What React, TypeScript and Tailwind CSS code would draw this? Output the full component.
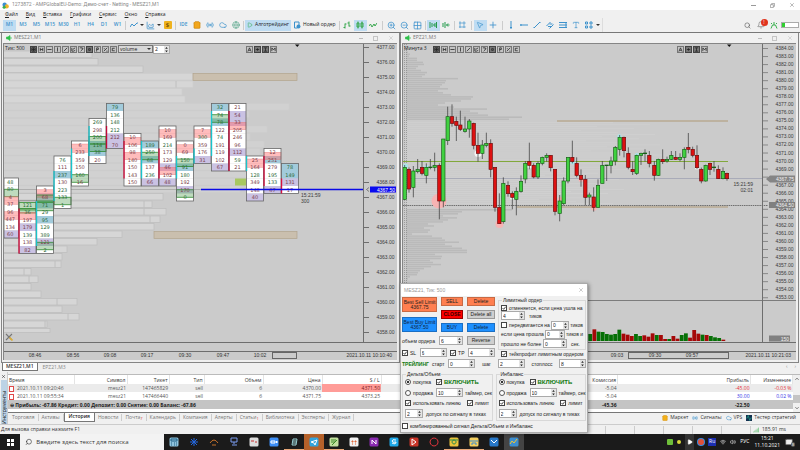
import type { ReactNode } from "react";
import {
  Activity,
  AreaChart,
  Bell,
  Cloud,
  Frame,
  Globe,
  Grid2x2,
  Mail,
  MousePointer2,
  Play,
  Plus,
  Radio,
  Search,
  ShoppingBag,
  Signal,
  Type,
  Volume2,
  Wifi,
  X,
  ZoomIn,
  ZoomOut,
} from "lucide-react";

type Column = {
  top: number;
  values: string[];
  // one letter per cell: w white, b blue, p purple
  fill: string;
  // imbalance boxes: kind, first row, row count
  boxes: [string, number, number][];
  stripe?: [string, number, number];
};

// A leading "+" marks a positive delta, drawn in green
const COLUMNS: Column[] = [
  { top: 178, values: ["+48", "+80", "4", "37", "96", "447", "134", "60"], fill: "wwwwwwwp", boxes: [["g", 1.5, 1], ["r", 2.5, 1], ["r", 4.5, 1]] },
  { top: 201, values: ["+121", "+36", "197", "179", "+139", "138", "82"], fill: "wwwpwwp", boxes: [["g", 0.2, 1], ["g", 1, 0.6], ["r", 1.5, 1]], stripe: ["#d81040", 1, 6] },
  { top: 186, values: ["3", "68", "+71", "+29", "+95", "+129", "+389", "121", "+2"], fill: "wpbwbwwpw", boxes: [["r", 0.5, 1], ["g", 1.2, 1], ["g", 2, 1.3], ["g", 7.5, 1]], stripe: ["#18c4cc", 2, 6] },
  { top: 156, values: ["+76", "111", "+237", "130", "+223", "+133", "+1"], fill: "wwbwwww", boxes: [["g", 5.5, 1]], stripe: ["#18c4cc", 2, 4] },
  { top: 141, values: ["6", "233", "359", "150", "+160", "16"], fill: "wwwwww", boxes: [["r", 0.4, 1.1], ["g", 4.5, 1]], stripe: ["#18c4cc", 1, 4] },
  { top: 118.5, values: ["+269", "298", "+200", "+114", "+38", "20"], fill: "wwwbbw", boxes: [["g", 2.4, 1], ["g", 3.4, 1]], stripe: ["#18c4cc", 1, 4] },
  { top: 103.5, values: ["+79", "+136", "+148", "+212", "212", "70"], fill: "bwwwpp", boxes: [], stripe: ["#c00838", 3, 3] },
  { top: 133.5, values: ["10", "106", "98", "140", "150", "143", "150"], fill: "wwwwwww", boxes: [["r", 0.5, 1], ["r", 2.5, 1]], stripe: ["#d81040", 1, 5] },
  { top: 141, values: ["+189", "+250", "+68", "137", "+236", "66"], fill: "bwbwwp", boxes: [["g", 1.5, 1]], stripe: ["#18c4cc", 0, 5] },
  { top: 126, values: ["10", "169", "+214", "173", "129", "46", "102", "48"], fill: "wwwwwpwp", boxes: [["r", 0.5, 1], ["r", 5.5, 1]], stripe: ["#d81040", 3, 4] },
  { top: 141, values: ["0", "69", "+150", "+91", "+180", "192", "170", "+0"], fill: "wwwbwwpw", boxes: [["r", 0.5, 1], ["g", 2.4, 1], ["g", 6.5, 1]], stripe: ["#18c4cc", 2, 3] },
  { top: 126, values: ["7", "+300", "359", "176", "31"], fill: "wwwwp", boxes: [["r", 0.5, 1]], stripe: ["#18c4cc", 3, 2] },
  { top: 103.5, values: ["+32", "+74", "+78", "122", "+74", "191", "119", "102", "67"], fill: "bwbwwwwwp", boxes: [["g", 1.5, 1]], stripe: ["#18c4cc", 1, 6] },
  { top: 103.5, values: ["21", "54", "33", "205", "246", "96", "112", "+59", "21"], fill: "wppwwwpww", boxes: [["r", 2.5, 1]], stripe: ["#c00838", 1, 8] },
  { top: 156, values: ["25", "164", "+128", "349", "148", "40"], fill: "wwwwwp", boxes: [["r", 0.4, 1.1]], stripe: ["#18c4cc", 0, 2] },
  { top: 148.5, values: ["12", "251", "279", "+195", "+133", "67"], fill: "wbwwwp", boxes: [["r", 0.5, 1]], stripe: ["#d81040", 1, 4] },
  { top: 163.5, values: ["+78", "+149", "131", "17"], fill: "bbpw", boxes: [], stripe: ["#d81040", 2, 2] },
];

const CELL_FILL: Record<string, string> = { w: "#ffffff", b: "#a2cbdb", p: "#cac2e3" };

// Right edges of the market profile rows, top to bottom
const PROFILE = [
  92, 98, 143, 193, 193, 182, 185, 289, 249, 246, 267, 250, 264, 260, 255, 250, 250, 246, 240,
  163, 152, 166, 160, 154, 122, 97, 67, 62, 61, 31, 38, 31, 41, 77, 62, 79, 47, 50,
];
const PROFILE_SPLITS: [number, number][] = [
  [176, 81], [144, 201], [144, 208.5], [150, 216], [55, 261], [24, 268.5], [29, 276], [57, 298.5], [68, 313.5], [45, 321],
];

// centre, high, low, body top, body bottom, rising
type Candle = [number, number, number, number, number, number];

const EARLY: Candle[] = [
  [14, 225, 330, 232, 328, 1], [27, 232, 308, 238, 297, 0], [40, 228, 322, 243, 292, 1], [53, 207, 250, 238, 245, 1],
  [66, 213, 256, 232, 250, 0], [79, 220, 280, 232, 256, 1], [91, 207, 238, 231, 233, 1], [104, 188, 244, 226, 232, 1],
  [118, 220, 388, 226, 333, 0], [130, 147, 352, 147, 333, 1], [143, 50, 165, 80, 152, 1], [156, 43, 110, 80, 100, 0],
  [169, 80, 153, 94, 106, 0], [181, 62, 123, 105, 118, 0], [195, 80, 128, 117, 124, 1], [208, 87, 143, 93, 117, 1],
  [221, 98, 178, 100, 166, 0], [234, 128, 215, 166, 190, 0], [247, 150, 207, 165, 190, 1], [259, 128, 172, 160, 166, 1],
  [272, 148, 262, 160, 238, 0], [285, 232, 365, 232, 352, 0], [298, 310, 401, 352, 401, 0], [310, 262, 401, 280, 395, 1],
  [324, 274, 320, 286, 311, 0], [337, 304, 358, 310, 322, 0], [349, 292, 376, 304, 328, 1], [363, 256, 308, 274, 304, 1],
  [376, 213, 280, 220, 267, 1], [388, 158, 238, 214, 226, 0], [401, 220, 265, 226, 261, 0], [414, 214, 267, 220, 261, 1],
  [427, 200, 226, 202, 220, 1], [440, 190, 215, 196, 202, 1], [452, 196, 244, 196, 233, 0], [465, 238, 376, 238, 364, 0],
  [479, 315, 394, 333, 370, 1], [491, 262, 346, 273, 341, 1], [504, 202, 280, 202, 273, 1], [517, 152, 220, 202, 215, 0],
  [530, 202, 262, 220, 256, 0], [543, 238, 290, 256, 268, 0], [556, 255, 346, 268, 322, 0], [568, 308, 346, 315, 321, 1],
  [581, 292, 365, 321, 352, 0], [594, 268, 352, 286, 352, 1],
];

const LATE: Candle[] = [
  [37, 363, 430, 376, 430, 1], [50, 376, 423, 375, 377, 1], [63, 350, 400, 363, 376, 1], [76, 318, 376, 322, 363, 1],
  [89, 285, 347, 292, 328, 1], [102, 290, 352, 292, 332, 0], [115, 322, 388, 340, 382, 0], [128, 363, 405, 388, 395, 0],
  [140, 344, 405, 346, 400, 1], [153, 338, 375, 340, 346, 1], [165, 328, 365, 339, 341, 1], [178, 333, 382, 346, 370, 0],
  [193, 363, 422, 376, 406, 0], [205, 356, 408, 358, 406, 1], [218, 328, 372, 358, 365, 0], [231, 350, 368, 358, 363, 1],
  [244, 333, 360, 346, 358, 1], [257, 333, 360, 352, 358, 0], [270, 340, 364, 352, 358, 1], [283, 322, 388, 328, 352, 1],
  [295, 279, 340, 322, 328, 0], [308, 320, 352, 328, 346, 0], [321, 316, 388, 346, 383, 0], [334, 383, 430, 388, 423, 0],
  [347, 374, 425, 376, 423, 1], [360, 368, 405, 370, 388, 0], [372, 363, 395, 381, 383, 1], [385, 376, 417, 388, 416, 0],
  [399, 382, 418, 394, 416, 1], [411, 398, 422, 400, 416, 0],
];

const VOLUMES: [number, number][] = [
  [21, 1], [35, 0], [28, 1], [27, 1], [21, 1], [19, 1], [21, 1], [34, 1], [22, 0], [19, 0], [15, 0], [21, 1], [15, 1],
  [17, 0], [13, 0], [23, 0], [18, 1], [18, 0], [6, 0], [6, 1], [15, 0], [7, 0], [18, 1], [23, 1], [10, 0], [33, 0],
  [22, 0], [19, 1], [18, 0], [15, 1], [11, 1], [9, 1], [4, 0],
];

// Profile of the second chart above and below the value area
const UPPER = [8, 10, 9, 17, 17, 23, 24, 18, 16, 21, 27, 25, 22, 58, 46, 45, 42, 40, 48, 38, 43, 51, 73, 71, 61, 45, 38, 54, 87, 70, 78, 88, 122, 109];
const LOWER = [112, 62, 58, 43, 57, 48, 43, 28, 34, 24, 30, 28, 12, 32, 42, 45, 59, 45, 52, 62, 67, 67, 35, 42, 41, 30, 33, 41, 31, 24, 20, 18, 17, 10, 8];

function range(from: number, to: number) {
  return Array.from({ length: from - to + 1 }, (_, i) => from - i);
}

function Footprint() {
  return (
    <g className="text-[5px]" textAnchor="middle" fontFamily="DejaVu Sans">
      {COLUMNS.map((col, i) => {
        const x = i === 0 ? 4 : 19 + 17.5 * (i - 1);
        const w = i === 0 ? 14.5 : 17;
        return (
          <g key={i}>
            {col.values.map((_, r) => (
              <rect key={r} x={x} y={col.top + r * 7.5} width={w} height={7.5} fill={CELL_FILL[col.fill[r]]} />
            ))}
            {col.boxes.map(([kind, row, rows], b) => (
              <rect
                key={b}
                x={x}
                y={col.top + row * 7.5}
                width={w}
                height={rows * 7.5}
                fill={kind === "g" ? "#4a9a4a" : "#ff6a6a"}
                fillOpacity={kind === "g" ? 0.36 : 0.45}
                stroke={kind === "g" ? "#2f8a2f" : "#e07a7a"}
                strokeWidth={kind === "g" ? 0.8 : 0.4}
              />
            ))}
            <rect x={x} y={col.top} width={w} height={col.values.length * 7.5} fill="none" stroke="#666" strokeWidth={0.8} />
            {col.stripe && (
              <rect x={x - 0.6} y={col.top + col.stripe[1] * 7.5} width={1.3} height={col.stripe[2] * 7.5} fill={col.stripe[0]} />
            )}
            {col.values.map((v, r) => (
              <text key={r} x={x + w / 2 - (i === 0 ? 1 : 0)} y={col.top + r * 7.5 + 5.6} fill={v[0] === "+" ? "#2f6b3c" : "#7d3f4c"}>
                {v.replace("+", "")}
              </text>
            ))}
          </g>
        );
      })}
    </g>
  );
}

function TimeAxis({ x, labels, date, box }: { x: number; labels: [number, string][]; date: string; box: [number, number] }) {
  return (
    <g fontFamily="Liberation Sans" className="text-[5px]" fill="#333">
      <path d={`M${x} 342.5h393M${x} 351.5h393`} stroke="#6e6e6e" />
      <rect x={box[0]} y={352.5} width={box[1]} height={6} fill="none" stroke="#666" />
      {labels.map(([lx, t]) => (
        <text key={t} x={lx} y={357} textAnchor="middle">
          {t}
        </text>
      ))}
      <text x={x + 388} y={357} textAnchor="end">
        {date}
      </text>
    </g>
  );
}

function ClusterChart() {
  return (
    <svg viewBox="4 44 393 316" className="block size-full" preserveAspectRatio="xMinYMin meet">
      <rect x={4} y={44} width={393} height={316} fill="#cbcbcb" />
      {PROFILE.map((edge, i) => (
        <rect
          key={i}
          x={3}
          y={51 + i * 7.5}
          width={edge - 3}
          height={i === PROFILE.length - 1 ? 4 : 6.5}
          fill={i > 6 && i < 19 ? "#d1d1d1" : "#d6d6d6"}
          stroke={i > 2 && i < 19 ? "#cdcdcd" : "#bdbdbd"}
          strokeWidth={0.7}
        />
      ))}
      {PROFILE_SPLITS.map(([x, y]) => (
        <path key={y} d={`M${x} ${y}v6.5`} stroke="#bababa" strokeWidth={0.8} />
      ))}
      <rect x={193} y={73.5} width={104} height={7} fill="#cabfae" stroke="#b3a48e" strokeWidth={0.7} />
      <rect x={154} y={231.5} width={143} height={7} fill="#cabfae" stroke="#b3a48e" strokeWidth={0.7} />
      <path d="M4 189.5h359" stroke="#a6a6a6" strokeWidth={0.8} />
      <Footprint />
      <rect x={235} y={178.5} width={11} height={7} fill="#a8c860" />
      <path d="M201 189.5h162" stroke="#0a0ae6" strokeWidth={1.4} />
      <path d="M363.5 44v298" stroke="#6e6e6e" />
      <path d="M295 44.5h4.500l-2.250 2.500z" fill="#111" />
      <g fontFamily="Liberation Sans" className="text-[5px]" fill="#3a3a3a">
        {range(4377, 4358).map((p) => {
          const y = 332 - (p - 4358) * 15;
          return (
            <g key={p}>
              <path d={`M364 ${y + 0.5}h5`} stroke="#6e6e6e" />
              <text x={394.5} y={y + 2} textAnchor="end">
                {p}.00
              </text>
            </g>
          );
        })}
        <rect x={370} y={186.5} width={26} height={6} fill="#0a0af0" />
        <text x={395} y={191.5} textAnchor="end" fill="#fff">
          4367.50
        </text>
        <path d="M369 187.5l-2.5 2 2.5 2" fill="none" stroke="#555" strokeWidth={0.7} />
        <text x={301} y={197}>
          15:21:59
        </text>
        <text x={301} y={203}>
          300
        </text>
      </g>
      <g strokeWidth={1.1}>
        <path d="M6 334l6 6M12 334l-6 6" stroke="#777" />
        <path d="M9.500 337.500l3 3" stroke="#e0b030" strokeWidth={1.6} />
      </g>
      <TimeAxis
        x={4}
        labels={[[35, "08:46"], [73, "08:56"], [110, "09:08"], [147, "09:17"], [185, "09:30"], [223, "09:47"], [260, "10:02"]]}
        date="2021.10.11 10:10:40"
        box={[272.5, 24]}
      />
    </svg>
  );
}

// Candles are recorded on a grid three times finer than the chart
function Candles({ x, y, data }: { x: number; y: number; data: Candle[] }) {
  return (
    <g transform={`translate(${x} ${y}) scale(${1 / 3})`}>
      {data.map(([cx, high, low, top, bottom, up]) => (
        <g key={cx}>
          <path d={`M${cx} ${high}V${low}`} stroke="#3a3a3a" strokeWidth={2.2} />
          <rect
            x={cx - 5}
            y={top}
            width={10}
            height={bottom - top}
            fill={up ? "#41d141" : "#dd1111"}
            stroke={up ? "#176017" : "#6d0c0c"}
            strokeWidth={2}
          />
        </g>
      ))}
    </g>
  );
}

function CandleChart() {
  return (
    <svg viewBox="403 44 393 316" className="block size-full" preserveAspectRatio="xMinYMin meet">
      <rect x={403} y={44} width={393} height={316} fill="#cbcbcb" />
      {UPPER.map((w, i) => (
        <rect key={i} x={406} y={51.5 + i * 2.03} width={w - 6} height={1.5} fill="#bababa" />
      ))}
      {range(41, 1).map((i) => (
        <rect key={i} x={406} y={120 + i * 2.03} width={120 + ((i * 37) % 90) + (i < 25 ? 50 : 10)} height={1} fill="#d1d1d1" opacity={0.7} />
      ))}
      {LOWER.map((w, i) => (
        <rect key={i} x={406} y={209 + i * 2.03} width={w - 6} height={1.5} fill="#bababa" />
      ))}
      <path d="M404.5 44v298M406.5 44v298" stroke="#8d8d8d" strokeDasharray="1 1" strokeWidth={0.8} />
      <path d="M403 178.5h359" stroke="#a9abb8" />
      <path d="M403 161.5h325" stroke="#82a83c" strokeWidth={1.2} />
      <path d="M557 121h171M517 207h211" stroke="#b9aa92" strokeWidth={1.3} />
      <path d="M403 205.5h365" stroke="#555" strokeWidth={0.8} strokeDasharray="1.5 0.7" />
      <g fill="#f7b3b3">
        <circle cx={439} cy={201} r={7.5} />
        <circle cx={499.5} cy={224} r={4} />
        <circle cx={581} cy={179.5} r={2.5} />
        <circle cx={560} cy={199} r={2.2} />
        <circle cx={594} cy={208} r={2.8} />
      </g>
      <g fill="#f6f6f6">
        <circle cx={478} cy={153.5} r={3.5} />
        <circle cx={529.5} cy={166} r={2.6} />
        <circle cx={512} cy={197.5} r={2.2} />
        <circle cx={697} cy={168} r={2} />
      </g>
      <g fill="#a9e6ea">
        <circle cx={405.5} cy={166} r={2.5} />
        <circle cx={426.5} cy={167} r={2} />
        <circle cx={573} cy={162} r={2.5} />
        <circle cx={619.5} cy={136.5} r={2.2} />
        <circle cx={637} cy={155} r={2} />
      </g>
      <Candles x={400} y={90} data={EARLY} />
      <Candles x={590} y={40} data={LATE} />
      {VOLUMES.map(([h, up], i) => (
        <rect key={i} x={588.3 + i * 4.16} y={341 - h / 3} width={3.8} height={h / 3} fill={up ? "#067006" : "#a50808"} />
      ))}
      <path d="M403 300.5h393" stroke="#7c7c7c" strokeWidth={1.2} />
      <path d="M762.5 44v298" stroke="#6e6e6e" />
      <path d="M727 44.5h4.500l-2.250 2.500z" fill="#111" />
      <g fontFamily="Liberation Sans" className="text-[5px]" fill="#3a3a3a">
        {range(4384, 4353).map((p) => {
          const y = 48 + (4384 - p) * 8.04;
          return (
            <g key={p}>
              <path d={`M763 ${y + 0.5}h5`} stroke="#777" strokeWidth={0.8} />
              {/* the last price tag covers 4368 */}
              {p !== 4368 && (
                <text x={793.5} y={y + 2} textAnchor="end">
                  {p}.00
                </text>
              )}
            </g>
          );
        })}
        <path d="M766 179l4-3.500h25v7h-25z" fill="#858585" />
        <rect x={769} y={202} width={26} height={6} fill="#808080" />
        <rect x={769} y={335.5} width={21} height={6} fill="#808080" />
        <g fill="#f2f2f2" textAnchor="end">
          <text x={794} y={181}>
            4367.75
          </text>
          <text x={794} y={207}>
            4364.50
          </text>
          <text x={789} y={340.5}>
            150
          </text>
        </g>
        <g textAnchor="end">
          <text x={753} y={186}>
            15:21:59
          </text>
          <text x={753} y={192}>
            02:01
          </text>
        </g>
      </g>
      <TimeAxis
        x={403}
        labels={[[617, "09:03"], [655, "09:30"], [692, "09:57"]]}
        date="2021.10.11 10:21:03"
        box={[628.5, 100]}
      />
    </svg>
  );
}

const TOOL_SHAPES = [
  "M1 1h4v4h-4zM3 1v4M1 3h4",
  "M1.500 1v4M4.500 1v4M1.500 3h3",
  "M0.500 3h5",
  "M3 0.500v5",
  "M1 5l4-4",
  "M1 1v4h2M2 3l3-2M3 5l2-1",
  "M1 1h3v2l-2 2M4 3l1-1",
  "M2 2h2v2h-2z",
  "M2 5.500v-4.500h2v2h-2",
  "M1 5l4-4M1 2h1M4 5h1.500",
  "M4.500 1.500h-3v3h3",
];
const VIEW_SHAPES = ["M1 5.500l2-4.500 2 4.500M2 4h2", "M1 3h4M3 1.500v3", "M1 1h4M1 5h4M3 1v4", "M1 5v-4l2 2.500 2-2.500v4"];

function ToolStrip({ shapes, dark, name }: { shapes: string[]; dark: number[]; name: string }) {
  return (
    <div className="flex">
      {shapes.map((d, i) => (
        <button
          key={i}
          type="button"
          aria-label={`${name} ${i + 1}`}
          className={dark.includes(i) ? "mr-px size-[7px] border border-[#444] bg-[#777]" : "mr-px size-[7px] border border-[#777] bg-[#c4c4c4]"}
        >
          <svg viewBox="0 0 6 6" className="block size-full">
            <path d={d} fill="none" stroke="#222" strokeWidth={0.9} />
          </svg>
        </button>
      ))}
    </div>
  );
}

function ChartWindow({ title, head, children }: { title: string; head: ReactNode; children: ReactNode }) {
  return (
    <section className="flex min-w-0 flex-1 flex-col border-x border-b border-[#858585] bg-[#f0f0f0] pr-[2px] pb-[2px] pl-px">
      <header className="flex h-[10px] items-center gap-[2px] pl-[3px] text-[5px] text-[#777]">
        <svg viewBox="0 0 6 6" className="size-[6px]">
          <path d="M0.500 2h1.500l2-1.500v5l-2-1.500h-1.500zM5 2v2" fill="#2fc04a" stroke="#2fc04a" strokeWidth={0.7} />
        </svg>
        <h2 className="flex-1">{title}</h2>
        <div className="flex items-center gap-[10px] pr-[3px] text-[#bbb]">
          <button type="button" aria-label="Свернуть окно">
            <span className="block h-px w-[4px] bg-[#bbb]" />
          </button>
          <button type="button" aria-label="Развернуть окно">
            <span className="block size-[5px] border border-[#c4c4c4]" />
          </button>
          <button type="button" aria-label="Закрыть окно">
            <X size={6} />
          </button>
        </div>
      </header>
      <div className="relative min-h-0 flex-1 border-t border-l border-[#858585]">
        {children}
        <div className="absolute inset-x-0 top-px flex h-[8px] items-center pl-px text-[5px] text-[#222]">{head}</div>
      </div>
    </section>
  );
}

function Arrows() {
  return (
    <svg viewBox="0 0 5 8" className="h-[7px] w-[5px] shrink-0 bg-[#e4e4e4]" aria-hidden="true">
      <path d="M1 3l1.500-2 1.500 2zM1 5l1.500 2 1.500-2z" fill="#222" />
    </svg>
  );
}

function Spin({ label, value, width = "w-[27px]" }: { label: string; value: string; width?: string }) {
  return (
    <span className={`flex h-[9px] shrink-0 items-center border border-[#aaa] bg-white ${width}`}>
      <input aria-label={label} defaultValue={value} className="h-full w-0 min-w-0 flex-1 pl-px text-[5px] leading-none" />
      <Arrows />
    </span>
  );
}

function Check({ label, checked = true, strong }: { label: string; checked?: boolean; strong?: boolean }) {
  return (
    <label className={strong ? "flex items-center gap-[2px] text-[6px] font-bold text-[#0f7a0f]" : "flex items-center gap-[2px]"}>
      <span className="relative block size-[6px] shrink-0">
        <input type="checkbox" defaultChecked={checked} className="peer block size-[6px] appearance-none border border-[#444] bg-white" />
        <svg viewBox="0 0 6 6" className="absolute inset-0 hidden size-[6px] peer-checked:block">
          <path d="M1.500 3l1.200 1.300 2-2.600" fill="none" stroke="#222" strokeWidth={0.8} />
        </svg>
      </span>
      <span className="whitespace-nowrap">{label}</span>
    </label>
  );
}

function Option({ group, label, checked }: { group: string; label: string; checked?: boolean }) {
  return (
    <label className="flex w-[29px] shrink-0 items-center gap-[2px]">
      <input
        type="radio"
        name={group}
        defaultChecked={checked}
        className="size-[6px] shrink-0 appearance-none rounded-full border border-[#555] bg-white checked:bg-[radial-gradient(circle,#333_40%,white_50%)]"
      />
      {label}
    </label>
  );
}

function SignalGroup({ title, id }: { title: string; id: string }) {
  return (
    <fieldset className="relative flex h-[47px] min-w-0 flex-1 flex-col justify-between border border-[#d8d8d8] px-[2px] pt-[4px] pb-[2px]">
      <legend className="absolute -top-[4px] left-[3px] bg-[#f0f0f0] px-px leading-[7px]">{title}</legend>
      <div className="flex items-center gap-[2px]">
        <Option group={id} label="покупка" checked />
        <Check label="ВКЛЮЧИТЬ" strong />
      </div>
      <div className="flex items-center gap-[2px]">
        <Option group={id} label="продажа" />
        <Spin label="таймер, сек" value="10" />
        <span className="whitespace-nowrap">таймер, сек</span>
      </div>
      <div className="flex items-center gap-[6px]">
        <Check label="использовать линию" />
        <Check label="лимит" />
      </div>
      <div className="flex items-center gap-[3px]">
        <Spin label="допуск по сигналу в тиках" value="2" width="w-[18px]" />
        <span className="whitespace-nowrap">допуск по сигналу в тиках</span>
      </div>
    </fieldset>
  );
}

const ORANGE = "border border-[#c86a44] bg-[#ff7f50] leading-none text-[#222]";
const BLUE = "border border-[#1a6fc4] bg-[#1e90ff] leading-none text-[#12243c]";
const GREY = "border border-[#999] bg-[#cfcfcf] leading-none text-[#222]";

function OrderPanel() {
  return (
    <section
      role="dialog"
      aria-label="MESZ21, Тик: 500"
      className="absolute right-[212px] bottom-[17px] z-10 flex h-[150px] w-[188px] flex-col border border-[#aaa] bg-[#f0f0f0] font-['Liberation_Sans',sans-serif] text-[5px] leading-[6px] text-[#222] shadow-[1px_1px_4px_#0006]"
    >
      <header className="flex h-[12px] shrink-0 items-center justify-between bg-white px-[3px] text-[#999]">
        <h2>MESZ21, Тик: 500</h2>
        <button type="button" aria-label="Закрыть панель">
          <X size={6} />
        </button>
      </header>
      <div className="flex gap-[2px] px-px pt-px">
        <div className="w-[94px]">
          <div className="flex gap-[4px]">
            <div className="flex w-[35px] flex-col justify-between">
              <button type="button" className={`h-[15px] ${ORANGE}`}>
                Best Sell Limit
                <br />
                4367.75
              </button>
              <button type="button" className={`h-[15px] ${BLUE}`}>
                Best Buy Limit
                <br />
                4367.50
              </button>
            </div>
            <div className="grid flex-1 grid-cols-[22px_28px] grid-rows-[9px_9px_9px] gap-[4px]">
              <button type="button" className={ORANGE}>SELL</button>
              <button type="button" className={ORANGE}>Delete</button>
              <button type="button" className="border border-[#900] bg-[#ff0000] leading-none font-bold text-[#300]">CLOSE</button>
              <button type="button" className={GREY}>Delete all</button>
              <button type="button" className={BLUE}>BUY</button>
              <button type="button" className={BLUE}>Delete</button>
            </div>
          </div>
          <div className="mt-[4px] flex items-center justify-between pr-px">
            объем ордера
            <Spin label="объем ордера" value="6" width="w-[24px]" />
            <button type="button" className={`h-[9px] w-[28px] ${GREY}`}>Reverse</button>
          </div>
          <div className="mt-[3px] flex items-center justify-between pr-px">
            <Check label="SL" />
            <Spin label="SL" value="6" />
            <Check label="TP" />
            <Spin label="TP" value="4" />
          </div>
        </div>
        <div className="min-w-0 flex-1">
          <fieldset className="relative mt-[3px] flex h-[50px] flex-col justify-between border border-[#d8d8d8] px-[2px] pt-[4px] pb-px">
            <legend className="absolute -top-[4px] left-[3px] bg-[#f0f0f0] px-px">Лимитный ордер</legend>
            <Check label="отменяется, если цена ушла на" />
            <div className="flex items-center gap-[4px]">
              <Spin label="отмена, тиков" value="4" width="w-[24px]" />
              тиков
            </div>
            <div className="flex items-center justify-between">
              <Check label="передвигается на" checked={false} />
              <Spin label="передвигается на, тиков" value="0" width="w-[18px]" />
              тиков
            </div>
            <div className="flex items-center justify-between">
              если цена прошла
              <Spin label="цена прошла, тиков" value="0" width="w-[20px]" />
              тиков и
            </div>
            <div className="flex items-center gap-[4px]">
              <span className="w-[38px] whitespace-nowrap">прошло не более</span>
              <Spin label="прошло не более, сек" value="0" width="w-[24px]" />
              сек.
            </div>
          </fieldset>
          <div className="mt-px pl-[3px]">
            <Check label="тейкпрофит лимитным ордером" />
          </div>
        </div>
      </div>
      <div className="mt-[2px] flex items-center px-px">
        <span className="w-[30px] font-semibold text-[#0f7a0f]">ТРЕЙЛИНГ</span>
        <span className="w-[16px]">старт</span>
        <Spin label="старт" value="0" />
        <span className="w-[23px] text-center">шаг</span>
        <Spin label="шаг" value="2" />
        <span className="flex-1 text-center">стоплосс</span>
        <Spin label="стоплосс" value="8" />
      </div>
      <div className="mt-[6px] flex gap-[3px] px-px">
        <SignalGroup title="Дельта/Объем" id="delta" />
        <SignalGroup title="Инбаланс" id="imbalance" />
      </div>
      <div className="mt-[2px] px-px">
        <Check label="комбинированный сигнал Дельта/Объем и Инбаланс" checked={false} />
      </div>
    </section>
  );
}

function Tool({ label, active, children }: { label: string; active?: boolean; children: ReactNode }) {
  return (
    <button
      type="button"
      aria-label={label}
      className={active ? "flex h-[11px] w-[13px] items-center justify-center bg-[#bfdcf2]" : "flex h-[11px] w-[13px] items-center justify-center"}
    >
      {children}
    </button>
  );
}

function Line({ d, color = "#3d92cc" }: { d: string; color?: string }) {
  return (
    <svg viewBox="0 0 8 8" className="size-[8px]">
      <path d={d} fill="none" stroke={color} strokeWidth={1} />
    </svg>
  );
}

function Caret() {
  return <span className="block border-x-2 border-t-2 border-x-transparent border-t-[#333]" />;
}

function Divider({ wide }: { wide?: boolean }) {
  return <span className={wide ? "mx-[2px] h-[9px] w-px bg-[#ccc]" : "mx-px h-[9px] w-px bg-[#ccc]"} />;
}

function Toolbar() {
  return (
    <div className="flex h-[14px] items-center bg-[#f0f0f0] pl-[3px] text-[#3d92cc]">
      <div className="flex w-[121px] justify-between">
        {["M1", "M3", "M5", "M15", "M30", "H1", "H4", "D1", "W1"].map((t, i) => (
          <button
            key={t}
            type="button"
            className={i === 0 ? "h-[11px] w-[13px] bg-[#bfdcf2] text-[5px] font-semibold" : "h-[11px] w-[13px] text-[5px] font-semibold"}
          >
            {t}
          </button>
        ))}
      </div>
      <Divider />
      <Tool label="Линия"><Line d="M0 6l2-3 2 2 3-3h1" /></Tool>
      <Caret />
      <Tool label="Шаблоны"><AreaChart size={9} /></Tool>
      <Caret />
      <Tool label="Доллар">
        <span className="flex size-[8px] items-center justify-center rounded-[1px] bg-[#efb21e] text-[6px] font-bold text-[#7a5200]">$</span>
      </Tool>
      <Divider />
      <button type="button" className="w-[13px] text-[5px] font-semibold">IDE</button>
      <Tool label="Магазин"><ShoppingBag size={8} fill="#f2a61c" color="#c98208" /></Tool>
      <Tool label="Сигналы"><Radio size={8} /></Tool>
      <Tool label="Облако"><Cloud size={8} /></Tool>
      <Tool label="Сеть"><Globe size={8} color="#5aa88c" /></Tool>
      <Divider />
      <button type="button" className="flex h-[11px] items-center gap-[2px] bg-[#bfdcf2] px-[2px] text-[5px] text-[#222]">
        <Play size={6} color="#2aa84a" />
        Алготрейдинг
      </button>
      <button type="button" className="flex h-[11px] items-center gap-[2px] px-[2px] text-[5px] text-[#222]">
        <svg viewBox="0 0 8 8" className="size-[8px]">
          <path d="M1.500 1h4.500v3M1.500 1v6h3" fill="none" stroke="#3d92cc" />
          <circle cx={5.5} cy={5.5} r={2} fill="#3d92cc" />
        </svg>
        Новый ордер
      </button>
      <Divider />
      <Tool label="Бары"><Line color="#39a84f" d="M2 2.500v5M0.500 6.500h1.500M2 3h1.500M6 0.500v5M4.500 2h1.500M6 5h1.500" /></Tool>
      <Tool label="Свечи" active><Line color="#39a84f" d="M1 2h2v4h-2zM5 2h2v4h-2zM2 0.500v7M6 0.500v7" /></Tool>
      <Tool label="Тики"><Line color="#39a84f" d="M0 5l1.500-2 1.500 3 2-3 1 2 2-3" /></Tool>
      <Divider wide />
      <Tool label="Увеличить"><ZoomIn size={9} /></Tool>
      <Tool label="Уменьшить"><ZoomOut size={9} /></Tool>
      <Tool label="Сетка"><Grid2x2 size={9} /></Tool>
      <Divider />
      <Tool label="Автопрокрутка" active><Line color="#239a4a" d="M1 1v6M3 2v4M5 4h3M6.500 2l-2 2 2 2M7.500 1v6" /></Tool>
      <Tool label="Сдвиг"><Line color="#239a4a" d="M1 2v4M3 1v6M4.500 4h3M6 2.500l-1.500 1.500 1.500 1.500" /></Tool>
      <Divider />
      <Tool label="Снимок"><Frame size={8} strokeDasharray="3 2" /></Tool>
      <Divider wide />
      <Tool label="Курсор" active><MousePointer2 size={8} /></Tool>
      <Tool label="Перекрестие"><Plus size={10} /></Tool>
      <Divider wide />
      <Tool label="Вертикальная линия"><Line d="M4 0v8M3 6.500h2" /></Tool>
      <Tool label="Горизонтальная линия"><Line d="M0 4h8M1 3v2" /></Tool>
      <Tool label="Трендовая линия"><Line d="M1 7l6-6M0.500 6.500h1.500M6 1.500h1.500" /></Tool>
      <Tool label="Канал"><Line d="M0.500 5l4-4M3.500 7.500l4-4M2 5.500h3M3.500 3h3" /></Tool>
      <Tool label="Фибоначчи"><Line d="M0 1.500h8M0 4h8M0 6.500h8M7 1v6" /></Tool>
      <Tool label="Текст"><Type size={8} /></Tool>
      <Tool label="Фигуры"><Line d="M0.500 1h2v2h-2zM5 1h2v2h-2zM0.500 5h2v2h-2zM5 5h2v2h-2z" /></Tool>
      <Caret />
      <span className="ml-[2px] h-full w-px bg-[#ddd]" />
      <div className="ml-auto flex items-center pr-px">
        <Tool label="Поиск"><Search size={7} color="#555" /></Tool>
        <Tool label="Уведомления">
          <span className="relative">
            <Bell size={8} color="#777" />
            <span className="absolute -top-[2px] -right-[3px] flex size-[7px] items-center justify-center rounded-full bg-[#e0331c] text-[5px] text-white">!</span>
          </span>
        </Tool>
        <Tool label="Соединение"><Line color="#35b04a" d="M4 1v3M2.500 4h3M2.500 4l-1.500 3.500M5.500 4l1.500 3.500M1 2l1 1M7 2l-1 1" /></Tool>
        <span className="ml-px flex h-[6px] w-[18px] border border-[#aaa] bg-white">
          <span className="w-[3px] bg-[#2fd02f]" />
        </span>
      </div>
    </div>
  );
}

const HEAD = ["Время", "Символ", "Тикет", "Тип", "Объем", "Цена", "S / L", "Комиссия", "Прибыль", "Изменение"];
const TRADES = [
  ["2021.10.11 09:20:46", "mesz21", "147465829", "sell", "6", "4370.00", "4371.50", "-5.04", "-45.00", "-0.03 %"],
  ["2021.10.11 09:55:34", "mesz21", "147466440", "sell", "6", "4371.75", "4373.25", "-5.04", "30.00", "0.02 %"],
];

function cellColor(row: number, col: number) {
  if (row === 0 && col === 6) return "bg-[#ff9c98] px-px text-right text-[#7a2020]";
  if (col > 7) return row === 0 ? "px-px text-right text-[#e8303a]" : "px-px text-right text-[#3030e8]";
  return col === 0 ? "px-px text-left" : "px-px text-right";
}

function History() {
  return (
    <table className="w-full table-fixed border-collapse bg-white text-[5px] leading-[8px] text-[#555]">
      <colgroup>
        <col className="w-[66px]" />
        <col className="w-[53px]" />
        <col className="w-[42px]" />
        <col className="w-[35px]" />
        <col className="w-[59px]" />
        <col className="w-[59px]" />
        <col className="w-[59px]" />
        <col />
        <col className="w-[133px]" />
        <col className="w-[42px]" />
      </colgroup>
      <thead>
        <tr className="h-[9px] text-[#333]">
          {HEAD.map((h, i) => (
            <th key={h} className={i === 0 ? "border-r border-[#e4e4e4] px-px text-left font-normal" : "border-r border-[#e4e4e4] px-px text-right font-normal"}>
              {h}
            </th>
          ))}
        </tr>
      </thead>
      <tbody>
        {TRADES.map((row, r) => (
          <tr key={r} className={r === 0 ? "h-[8px] bg-[#ebebeb]" : "h-[8px]"}>
            {row.map((v, c) => (
              <td key={c} className={cellColor(r, c)}>
                {c === 0 && <span className="mr-[3px] inline-block h-[6px] w-[5px] border border-[#e04a4a] bg-white align-middle" />}
                {v}
              </td>
            ))}
          </tr>
        ))}
        <tr className="h-[9px] bg-[#c4c4c4] font-bold text-[#222]">
          <td colSpan={7} className="px-[2px]">
            ⊖ Прибыль: -67.86 Кредит: 0.00 Депозит: 0.00 Снятие: 0.00 Баланс: -67.86
          </td>
          <td className="px-px text-right">-45.36</td>
          <td className="px-px text-right">-22.50</td>
          <td />
        </tr>
      </tbody>
    </table>
  );
}

const PANES = ["Торговля", "Активы", "История", "Новости", "Почта", "Календарь", "Компания", "Алерты", "Статьи", "Библиотека", "Эксперты", "Журнал"];

function Toolbox() {
  return (
    <section className="flex h-[52px] bg-[#f0f0f0]">
      <div className="flex w-[7px] flex-col items-center pt-[2px]">
        <X size={5} />
        <div className="mt-px flex-1 rotate-180 bg-[#bcd3e6] text-[5px] leading-[6px] whitespace-nowrap [writing-mode:vertical-rl]">Инструменты</div>
      </div>
      <div className="flex min-w-0 flex-1 flex-col border-l border-[#ccc]">
        <div className="mt-[2px] flex h-[38px] border-t border-[#bbb] bg-white">
          <div className="min-w-0 flex-1">
            <History />
          </div>
          <div className="flex w-[7px] flex-col items-center justify-between bg-[#f0f0f0] py-[2px] text-[#555]">
            <svg viewBox="0 0 5 5" className="size-[4px]"><path d="M0.500 3.500l2-2 2 2" fill="none" stroke="#555" /></svg>
            <span className="mt-auto mb-[3px] h-[8px] w-full bg-[#c4c4c4]" />
            <svg viewBox="0 0 5 5" className="size-[4px]"><path d="M0.500 1.500l2 2 2-2" fill="none" stroke="#555" /></svg>
          </div>
        </div>
        <div className="flex h-[10px] items-start border-t border-[#777] text-[5px] text-[#777]">
          <nav className="flex flex-1 pl-px">
            {PANES.map((p) => (
              <button
                key={p}
                type="button"
                className={
                  p === "История"
                    ? "h-[9px] border-x border-b border-[#777] bg-white px-[4px] font-semibold text-[#222]"
                    : "my-px h-[7px] border-r border-[#ccc] px-[3px] leading-[7px]"
                }
              >
                {p}
                {p === "Почта" && <sub className="text-[4px] text-[#e03030]">7</sub>}
                {p === "Статьи" && <sub className="text-[4px] text-[#e03030]">1</sub>}
              </button>
            ))}
          </nav>
          <div className="flex h-[9px] items-center gap-[4px] pr-[4px] text-[#333]">
            <a href="#market" className="flex items-center gap-[2px]"><ShoppingBag size={6} fill="#f2b01c" color="#d8920c" />Маркет</a>
            <a href="#signals" className="flex items-center gap-[2px]"><Radio size={6} color="#3d92cc" />Сигналы</a>
            <a href="#vps" className="flex items-center gap-[2px]"><Cloud size={6} color="#3d92cc" />VPS</a>
            <a href="#tester" className="flex items-center gap-[2px]"><Activity size={6} color="#2ad0a0" className="bg-[#143050]" />Тестер стратегий</a>
          </div>
        </div>
      </div>
    </section>
  );
}

const APPS: { name: string; bg: string; d: string; color: string; active?: string }[] = [
  { name: "Калькулятор", bg: "#8fc3dc", d: "M2 2h6v2h-6zM2 6h1M5 6h1M7 6h1M2 8h1M5 8h1M7 8h1", color: "#1e5f84" },
  { name: "Звезда", bg: "none", d: "M2 2l6 6M8 2l-6 6M5 1v8M1 5h8", color: "#2468e0" },
  { name: "Дуга", bg: "none", d: "M1 6q4-6 8 0M3 8h4", color: "#c4702a" },
  { name: "Компьютер", bg: "none", d: "M2 1h6v4h-6zM5 5v2M3 8h5", color: "#7a9cf0" },
  { name: "Карта", bg: "#dcdcdc", d: "M2 4h3M6 5h2", color: "#c83030" },
  { name: "Zoom", bg: "#3d8ef5", d: "M2 4h4v2h-4zM7 5l1-1v2z", color: "#ffffff" },
  { name: "Блокнот", bg: "none", d: "M3 8l1-6h4l-1 6zM4 4h3M4 6h3", color: "#9cd4d8", active: "border-b border-[#e8a878]" },
  { name: "Telegram", bg: "#33a4dc", d: "M2 5l6-2-2 5-1-2z", color: "#ffffff", active: "bg-[#b5612a]" },
  { name: "Notepad++", bg: "#c4e0a0", d: "M2 3h5M2 5h4M3 8l5-5", color: "#3c8a28", active: "border-b border-[#e8a878]" },
  { name: "Store", bg: "#f0f0f0", d: "M3 4h1v1h-1zM6 4h1v1h-1zM3 7h1M6 7h1", color: "#e06030" },
  { name: "OneNote", bg: "#8a2bb0", d: "M3 7v-4l4 4v-4", color: "#ffffff" },
  { name: "Skype", bg: "#1ea8e8", d: "M7 3q-4-1-4 1t4 1q0 3-4 1", color: "#ffffff" },
  { name: "Антивирус", bg: "#c83428", d: "M3 2v6l4-3z", color: "#ffffff" },
  { name: "Опера", bg: "none", d: "M5 1a4 4 0 1 0 .1 0", color: "#e0343c" },
  { name: "Chrome", bg: "#eac43c", d: "M5 3a2 2 0 1 0 .1 0M1 3h8", color: "#2f8c4a", active: "border-b border-[#e8a878]" },
  { name: "Проводник", bg: "#f4cf60", d: "M1 4h8M3 8v-2h4v2", color: "#3a8cd0", active: "border-b border-[#e8a878]" },
  { name: "Почта", bg: "#2878c8", d: "M2 3l3 3 3-3", color: "#ffffff" },
  { name: "Терминал", bg: "#3d8ed0", d: "M1 7l2-3 2 2 3-4", color: "#f2c430", active: "bg-[#444]" },
];

function Taskbar() {
  return (
    <footer className="flex h-[16px] items-center bg-[#1b1b1b] text-white">
      <button type="button" aria-label="Пуск" className="grid h-full w-[20px] grid-cols-[3px_3px] place-content-center gap-px">
        <span className="size-[3px] bg-white" />
        <span className="size-[3px] bg-white" />
        <span className="size-[3px] bg-white" />
        <span className="size-[3px] bg-white" />
      </button>
      <label className="flex h-full w-[144px] items-center gap-[4px] bg-[#f3f3f3] pl-[5px] text-[#333]">
        <Search size={8} className="-scale-x-100" />
        <input placeholder="Введите здесь текст для поиска" aria-label="Поиск" className="w-full text-[6px] placeholder:text-[#333]" />
      </label>
      <nav className="flex h-full">
        {APPS.map((a) => (
          <button key={a.name} type="button" aria-label={a.name} className={`flex h-full w-[20px] items-center justify-center ${a.active ?? ""}`}>
            <svg viewBox="0 0 10 10" className="size-[10px]">
              <rect x={0.5} y={0.5} width={9} height={9} rx={1.5} fill={a.bg} />
              <path d={a.d} fill="none" stroke={a.color} />
            </svg>
          </button>
        ))}
      </nav>
      <div className="ml-auto flex h-full items-center gap-[4px] pr-[7px] text-[5px]">
        <span className="size-[6px] rounded-[1px] bg-[#6fbf3a]" />
        <span className="size-[4px] rounded-full bg-[#d8d83a]" />
        <span className="flex h-full w-[9px] items-center justify-center bg-[#333]">
          <Play size={6} fill="#fff" />
        </span>
        <span className="size-[6px] rounded-full bg-[#e05038] ring-1 ring-[#3a8ce0]" />
        <span className="bg-[#1c2fb0] px-px">Ru</span>
        <Wifi size={6} />
        <Volume2 size={6} />
        <span>РУС</span>
        <span className="px-px text-center leading-[7px]">
          15:21
          <br />
          11.10.2021
        </span>
        <span className="relative">
          <Mail size={8} fill="#eee" color="#555" />
          <span className="absolute -right-[2px] -bottom-px rounded-full bg-[#555] px-px text-[4px] leading-[5px]">8</span>
        </span>
      </div>
    </footer>
  );
}

function RestoreIcon() {
  return (
    <svg viewBox="0 0 6 6" className="size-[5px]">
      <path d="M0.500 2h3.500v3.500h-3.500zM2 2v-1.500h3.500v3.500h-1.500" fill="none" stroke="#888" strokeWidth={0.8} />
    </svg>
  );
}

export default function App() {
  return (
    <main className="relative flex h-screen min-h-[450px] flex-col overflow-hidden bg-[#f0f0f0] font-['Open_Sans','Noto_Sans',sans-serif]">
      <header className="flex h-[10px] items-center gap-[3px] bg-white px-[2px] text-[5px] text-[#888]">
        <svg viewBox="0 0 8 8" className="size-[7px]">
          <circle cx={3} cy={3} r={2.5} fill="#3d8ed0" />
          <circle cx={5.5} cy={5} r={2.3} fill="#f0b428" />
          <circle cx={2.5} cy={6} r={1.8} fill="#3fae50" />
        </svg>
        <h1 className="flex-1 font-['Roboto',sans-serif]">1273872 - AMPGlobalEU-Demo: Демо-счет - Netting - MESZ21,M1</h1>
        <div className="flex items-center gap-[14px] pr-[3px] text-[#777]">
          <button type="button" aria-label="Свернуть"><span className="block h-px w-[5px] bg-[#999]" /></button>
          <button type="button" aria-label="Восстановить"><RestoreIcon /></button>
          <button type="button" aria-label="Закрыть"><X size={6} /></button>
        </div>
      </header>
      <nav className="flex h-[8px] items-center gap-[8px] px-[5px] text-[5px] text-[#222]">
        {["Файл", "Вид", "Вставка", "Графики", "Сервис", "Окно", "Справка"].map((m) => (
          <button key={m} type="button" className="leading-[7px] first-letter:underline">
            {m}
          </button>
        ))}
      </nav>
      <Toolbar />
      <div className="flex min-h-0 flex-1 border-t border-[#777] px-px">
        <ChartWindow
          title="MESZ21,M1"
          head={
            <>
              <span className="w-[25px]">Тик: 500</span>
              <ToolStrip name="Инструмент" shapes={TOOL_SHAPES} dark={[0, 7]} />
              <span className="relative">
                <select aria-label="Показатель" className="block h-[8px] w-[35px] appearance-none border border-[#777] bg-[#d8d8d8] pl-px text-[5px] leading-none">
                  <option>volume</option>
                </select>
                <span className="pointer-events-none absolute top-[3px] right-[2px]"><Caret /></span>
              </span>
              <Spin label="Множитель" value="2" width="w-[17px]" />
              <div className="ml-auto pr-[119px]">
                <ToolStrip name="Вид" shapes={VIEW_SHAPES} dark={[1, 2]} />
              </div>
            </>
          }
        >
          <ClusterChart />
        </ChartWindow>
        <ChartWindow
          title="EPZ21,M3"
          head={
            <>
              <span className="w-[29px]">Минута 3</span>
              <ToolStrip name="Инструмент" shapes={TOOL_SHAPES} dark={[0, 7]} />
              <div className="ml-auto pr-[87px]">
                <ToolStrip name="Вид" shapes={VIEW_SHAPES} dark={[1, 2]} />
              </div>
            </>
          }
        >
          <CandleChart />
        </ChartWindow>
      </div>
      <div className="flex h-[9px] items-start pl-[2px] text-[5px] leading-[7px] text-[#888]">
        <button type="button" className="h-[8px] border-x border-b border-[#777] bg-white px-[3px] font-semibold text-[#333]">MESZ21,M1</button>
        <button type="button" className="h-[8px] px-[5px]">EPZ21,M3</button>
        <span className="ml-auto flex gap-[7px] pr-[4px]">
          <span>‹</span>
          <span>›</span>
        </span>
      </div>
      <Toolbox />
      <div className="flex h-[10px] items-center border-t border-[#ccc] pl-px text-[5px] text-[#333]">
        <span className="flex-1">Для вызова справки нажмите F1</span>
        {[1, 2, 3, 4, 5].map((n) => (
          <span key={n} className="h-[8px] w-[29px] border-l border-[#ccc]" />
        ))}
        <span className="flex h-[8px] w-[50px] items-center gap-[3px] border-l border-[#ccc] pl-[2px]">
          <Signal size={6} color="#35b04a" />
          185.91 ms
        </span>
      </div>
      <Taskbar />
      <OrderPanel />
    </main>
  );
}
